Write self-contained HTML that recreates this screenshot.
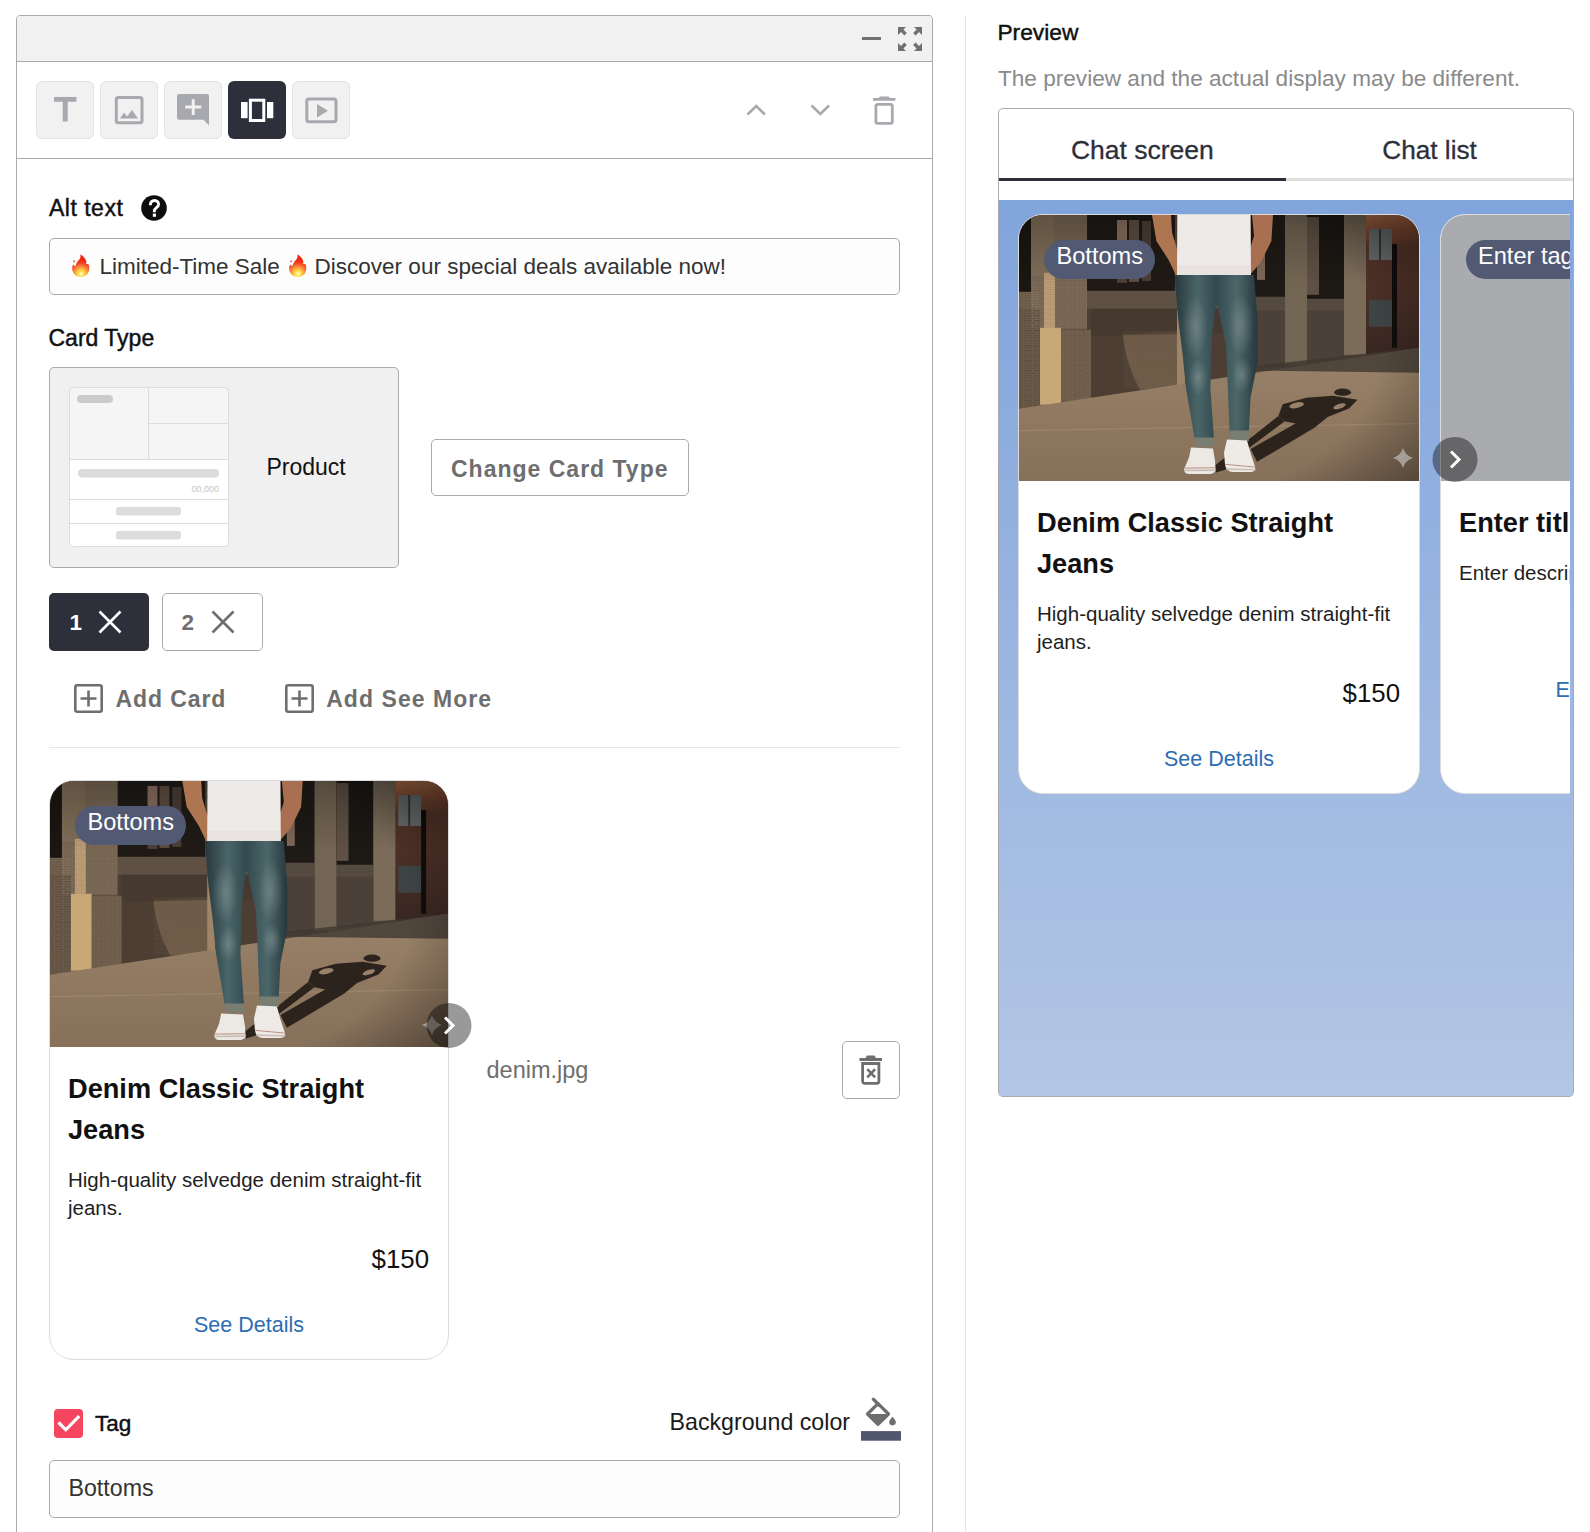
<!DOCTYPE html>
<html><head><meta charset="utf-8"><style>
*{margin:0;padding:0;}
html,body{width:1590px;height:1532px;overflow:hidden;background:#fff;}
body{position:relative;font-family:"Liberation Sans",sans-serif;}
.r{position:absolute;}
.t{position:absolute;white-space:nowrap;line-height:1;}
.card{position:absolute;width:400px;height:580px;box-sizing:border-box;border:1px solid #dcdcdc;border-radius:25px;background:#fff;overflow:hidden;}
.card .ph{position:absolute;left:0;top:0;width:398px;height:266.5px;overflow:hidden;}
.badge{position:absolute;left:25px;top:25px;width:111px;height:39px;border-radius:20px;background:#525a73;color:#fff;font-size:23.6px;line-height:33.5px;box-sizing:border-box;padding-left:12.5px;white-space:nowrap;}
</style></head><body>
<div class="r" style="left:16px;top:15px;width:915px;height:1600px;border:1px solid #aaaaae;border-radius:4px 4px 0 0;background:#fff;box-sizing:border-box;width:917px;"></div>
<div class="r" style="left:17px;top:16px;width:915px;height:45px;background:#f1f1f1;border-radius:3px 3px 0 0;"></div>
<div class="r" style="left:17px;top:61px;width:915px;height:1px;background:#aaaaae;"></div>
<div class="r" style="left:17px;top:158px;width:915px;height:1px;background:#aaaaae;"></div>
<div class="r" style="left:862px;top:37px;width:19px;height:3px;background:#707070;"></div>
<svg class="r" style="left:898px;top:27px" width="24" height="24" viewBox="0 0 24 24" fill="#707070">
<path d="M0 0h8l-2.6 2.6 3.4 3.4-2.4 2.4-3.4-3.4L0 8z"/>
<path d="M24 0h-8l2.6 2.6-3.4 3.4 2.4 2.4 3.4-3.4L24 8z"/>
<path d="M0 24h8l-2.6-2.6 3.4-3.4-2.4-2.4-3.4 3.4L0 16z"/>
<path d="M24 24h-8l2.6-2.6-3.4-3.4 2.4-2.4 3.4 3.4L24 16z"/>
</svg>
<div class="r" style="left:36px;top:81px;width:58px;height:58px;background:#f1f1f1;border:1px solid #e3e3e3;border-radius:6px;box-sizing:border-box;"></div>
<div class="r" style="left:100px;top:81px;width:58px;height:58px;background:#f1f1f1;border:1px solid #e3e3e3;border-radius:6px;box-sizing:border-box;"></div>
<div class="r" style="left:164px;top:81px;width:58px;height:58px;background:#f1f1f1;border:1px solid #e3e3e3;border-radius:6px;box-sizing:border-box;"></div>
<div class="r" style="left:228px;top:81px;width:58px;height:58px;background:#2d2f3b;border-radius:6px;"></div>
<div class="r" style="left:292px;top:81px;width:58px;height:58px;background:#f1f1f1;border:1px solid #e3e3e3;border-radius:6px;box-sizing:border-box;"></div>
<svg class="r" style="left:36px;top:81px" width="58" height="58" viewBox="0 0 58 58"><path fill="#a8a9ae" d="M18 16h22.5v4.8h-8.8v19.6h-5V20.8H18z"/></svg>
<svg class="r" style="left:100px;top:81px" width="58" height="58" viewBox="0 0 58 58"><rect x="16.3" y="16.4" width="25.7" height="25.4" rx="2" fill="none" stroke="#a8a9ae" stroke-width="3"/><path fill="#a8a9ae" d="M20 37.5l4-6 3 4 5-6.6 6 8.6z"/></svg>
<svg class="r" style="left:164px;top:81px" width="58" height="58" viewBox="0 0 58 58"><path fill="#a8a9ae" d="M15 13h28a2 2 0 0 1 2 2v29.3l-5.6-5.6H15a2 2 0 0 1-2-2V15a2 2 0 0 1 2-2z"/><path fill="#f1f1f1" d="M27.75 18.2h3v6.4h6.55v3h-6.55v6.4h-3v-6.4h-6.55v-3h6.55z"/></svg>
<svg class="r" style="left:228px;top:81px" width="58" height="58" viewBox="0 0 58 58"><rect x="13" y="21" width="6.6" height="16.2" fill="#fff"/><rect x="39" y="21" width="6.3" height="16.2" fill="#fff"/><rect x="22.4" y="19.2" width="13.4" height="20.3" fill="none" stroke="#fff" stroke-width="3"/></svg>
<svg class="r" style="left:292px;top:81px" width="58" height="58" viewBox="0 0 58 58"><rect x="14.8" y="17.9" width="29.2" height="22.8" rx="2" fill="none" stroke="#a8a9ae" stroke-width="3"/><path fill="#a8a9ae" d="M25 23v13.5l11-6.8z"/></svg>
<svg class="r" style="left:740px;top:95px" width="160" height="32" viewBox="0 0 160 32"><path d="M7.5 19.5l8.7-8.4 8.7 8.4" fill="none" stroke="#a8a9ae" stroke-width="2.6"/><path d="M71.5 10.5l8.8 8.5 8.8-8.5" fill="none" stroke="#a8a9ae" stroke-width="2.6"/><path fill="#a8a9ae" d="M133 3h22.4v2.8H133z M140 1.5h8.5l1.5 1.5h-11.5z"/><rect x="135.9" y="9.3" width="16.4" height="19" rx="1.8" fill="none" stroke="#a8a9ae" stroke-width="2.8"/></svg>
<div class="t " style="left:49px;top:197.11px;font-size:23px;color:#111;letter-spacing:0.5px;-webkit-text-stroke:0.45px #111;">Alt text</div>
<svg class="r" style="left:141px;top:194.5px" width="26" height="26" viewBox="0 0 26 26"><circle cx="13" cy="13" r="12.8" fill="#0d0d0d"/><path d="M9.3 10.2C9.3 6.9 11.2 5.5 13.6 5.5C16 5.5 17.6 7.2 17.6 9.5C17.6 12.5 13.3 12.9 13.3 16V17.3" fill="none" stroke="#fff" stroke-width="2.9"/><rect x="11.8" y="18.6" width="3.2" height="3.2" fill="#fff"/></svg>
<div class="r" style="left:49px;top:238px;width:851px;height:57px;border:1px solid #aaaaae;border-radius:5px;background:#fdfdfd;box-sizing:border-box;"></div>
<div class="r" style="left:71.8px;top:254px;line-height:0"><svg width="18" height="23" viewBox="0 0 18 23"><defs><radialGradient id="fg1" cx="9" cy="19.8" r="13" gradientUnits="userSpaceOnUse"><stop offset="0" stop-color="#fffbe0"/><stop offset="0.22" stop-color="#ffe04a"/><stop offset="0.5" stop-color="#fb9a3e"/><stop offset="0.8" stop-color="#f44a28"/><stop offset="1" stop-color="#ee2a14"/></radialGradient></defs><path fill="url(#fg1)" d="M8.6 0.3C10.5 1.8 12.8 3.6 13.9 6.2C14.6 7.8 14.3 9 14.1 10.1C15.3 9.8 16.4 10.3 16.6 10.4C17.3 12 17.6 14.2 16.9 17C16.3 19.6 14.2 21.6 11.6 22.6C10.2 23 7.6 23 5.8 22.5C3.4 21.6 1.5 19.6 0.6 17.2C-0.1 14.8 0.2 12.4 1 10.6C1.7 11.2 2.5 12 3.3 12.3C3.8 10.6 4.6 8.6 5.6 7.4C6.4 6.4 7.3 5.5 8.1 4.5C8.5 3.3 8.5 1.7 8.6 0.3z"/><ellipse cx="2.1" cy="7.3" rx="0.9" ry="1.1" fill="#f4502c"/></svg></div>
<div class="r" style="left:289px;top:254px;line-height:0"><svg width="18" height="23" viewBox="0 0 18 23"><defs><radialGradient id="fg2" cx="9" cy="19.8" r="13" gradientUnits="userSpaceOnUse"><stop offset="0" stop-color="#fffbe0"/><stop offset="0.22" stop-color="#ffe04a"/><stop offset="0.5" stop-color="#fb9a3e"/><stop offset="0.8" stop-color="#f44a28"/><stop offset="1" stop-color="#ee2a14"/></radialGradient></defs><path fill="url(#fg2)" d="M8.6 0.3C10.5 1.8 12.8 3.6 13.9 6.2C14.6 7.8 14.3 9 14.1 10.1C15.3 9.8 16.4 10.3 16.6 10.4C17.3 12 17.6 14.2 16.9 17C16.3 19.6 14.2 21.6 11.6 22.6C10.2 23 7.6 23 5.8 22.5C3.4 21.6 1.5 19.6 0.6 17.2C-0.1 14.8 0.2 12.4 1 10.6C1.7 11.2 2.5 12 3.3 12.3C3.8 10.6 4.6 8.6 5.6 7.4C6.4 6.4 7.3 5.5 8.1 4.5C8.5 3.3 8.5 1.7 8.6 0.3z"/><ellipse cx="2.1" cy="7.3" rx="0.9" ry="1.1" fill="#f4502c"/></svg></div>
<div class="t " style="left:99.4px;top:255.53px;font-size:22.5px;color:#333;">Limited-Time Sale</div>
<div class="t " style="left:314.6px;top:255.53px;font-size:22.5px;color:#333;">Discover our special deals available now!</div>
<div class="t " style="left:48.5px;top:326.91px;font-size:23px;color:#111;-webkit-text-stroke:0.45px #111;">Card Type</div>
<div class="r" style="left:49px;top:367px;width:350px;height:201px;border:1px solid #aaaaae;border-radius:5px;background:#f0f0f0;box-sizing:border-box;"></div>
<svg class="r" style="left:69px;top:387px" width="160" height="160" viewBox="0 0 160 160">
<rect x="0.5" y="0.5" width="159" height="159" rx="4" fill="#fff" stroke="#dcdcdc"/>
<path d="M4.5 0.5h151a4 4 0 0 1 4 4V72.5H0.5V4.5a4 4 0 0 1 4-4z" fill="#f5f5f5" stroke="#dcdcdc"/>
<path d="M79.5 0.5V72.5M79.5 36.5H159.5M0.5 112.5H159.5M0.5 136.5H159.5" stroke="#dcdcdc" fill="none"/>
<rect x="8" y="8" width="36" height="8" rx="4" fill="#cbcbcb"/>
<rect x="9" y="82" width="141" height="8.5" rx="4" fill="#dcdcdc"/>
<text x="150" y="105" text-anchor="end" font-family="Liberation Sans" font-size="9" fill="#c4c4c4">00,000</text>
<rect x="47" y="120" width="65" height="8.6" rx="3" fill="#dcdcdc"/>
<rect x="47" y="144" width="65" height="8.6" rx="3" fill="#dcdcdc"/>
</svg>
<div class="t " style="left:266.5px;top:456.11px;font-size:23px;color:#111;">Product</div>
<div class="r" style="left:431px;top:439px;width:258px;height:57px;border:1px solid #aaaaae;border-radius:5px;background:#fff;box-sizing:border-box;"></div>
<div class="t " style="left:451px;top:457.61px;font-size:23px;color:#6e6e6e;font-weight:700;letter-spacing:1.0px;">Change Card Type</div>
<div class="r" style="left:49px;top:593px;width:100px;height:58px;background:#2d2f3b;border-radius:5px;"></div>
<div class="r" style="left:162px;top:593px;width:101px;height:58px;border:1px solid #aaaaae;border-radius:5px;background:#fff;box-sizing:border-box;"></div>
<div class="t " style="left:69.5px;top:611.53px;font-size:22.5px;color:#fff;font-weight:700;">1</div>
<div class="t " style="left:181.5px;top:611.53px;font-size:22.5px;color:#6e6e6e;font-weight:700;">2</div>
<svg class="r" style="left:98px;top:610px" width="24" height="24" viewBox="0 0 24 24"><path d="M1.5 1.5l21 21M22.5 1.5l-21 21" stroke="#fff" stroke-width="2.6"/></svg>
<svg class="r" style="left:211px;top:610px" width="24" height="24" viewBox="0 0 24 24"><path d="M1.5 1.5l21 21M22.5 1.5l-21 21" stroke="#6e6e6e" stroke-width="2.6"/></svg>
<svg class="r" style="left:73.5px;top:684px" width="30" height="29" viewBox="0 0 30 29"><rect x="1.3" y="1.3" width="26.4" height="26.4" rx="2" fill="none" stroke="#6e6e6e" stroke-width="2.6"/><path d="M14.5 6.5v16M6.5 14.5h16" stroke="#6e6e6e" stroke-width="2.6"/></svg>
<svg class="r" style="left:284.5px;top:684px" width="30" height="29" viewBox="0 0 30 29"><rect x="1.3" y="1.3" width="26.4" height="26.4" rx="2" fill="none" stroke="#6e6e6e" stroke-width="2.6"/><path d="M14.5 6.5v16M6.5 14.5h16" stroke="#6e6e6e" stroke-width="2.6"/></svg>
<div class="t " style="left:115.5px;top:688.11px;font-size:23px;color:#6e6e6e;font-weight:700;letter-spacing:0.9px;">Add Card</div>
<div class="t " style="left:326.2px;top:688.11px;font-size:23px;color:#6e6e6e;font-weight:700;letter-spacing:1.05px;">Add See More</div>
<div class="r" style="left:49px;top:747px;width:851px;height:1px;background:#e6e6e6;"></div>
<div class="card" style="left:49px;top:779.8px;width:400px;"><div class="ph" style="width:398px"><svg width="100%" height="100%" viewBox="0 0 400 267" preserveAspectRatio="none" style="display:block">
<defs>
<linearGradient id="swa" x1="0" y1="0" x2="0" y2="1"><stop offset="0" stop-color="#9a836b"/><stop offset="0.5" stop-color="#907960"/><stop offset="1" stop-color="#86705a"/></linearGradient>
<linearGradient id="jna" x1="0" y1="0" x2="1" y2="0"><stop offset="0" stop-color="#27393e"/><stop offset="0.28" stop-color="#4a6568"/><stop offset="0.5" stop-color="#334a50"/><stop offset="0.75" stop-color="#4c676a"/><stop offset="1" stop-color="#26383d"/></linearGradient>
<pattern id="bra" width="9" height="5" patternUnits="userSpaceOnUse"><rect width="9" height="5" fill="none"/><path d="M0 4.5H9M4.5 0V2.2M0 2.2H9M8.9 2.2V4.5" stroke="#8d7a64" stroke-width="0.6" opacity="0.55"/></pattern>
<linearGradient id="tga" x1="0" y1="0" x2="0" y2="1"><stop offset="0" stop-color="#000" stop-opacity="0.25"/><stop offset="0.5" stop-color="#000" stop-opacity="0"/></linearGradient>
<radialGradient id="hla"><stop offset="0" stop-color="#fff" stop-opacity="0.2"/><stop offset="1" stop-color="#fff" stop-opacity="0"/></radialGradient>
<radialGradient id="vga" cx="0.32" cy="0.5" r="0.9"><stop offset="0.65" stop-color="#000" stop-opacity="0"/><stop offset="1" stop-color="#000" stop-opacity="0.45"/></radialGradient>
<linearGradient id="rba" x1="0" y1="0" x2="0" y2="1"><stop offset="0" stop-color="#c07a50"/><stop offset="0.1" stop-color="#8e5238"/><stop offset="0.22" stop-color="#5a382c"/><stop offset="1" stop-color="#342420"/></linearGradient>
</defs>
<rect width="400" height="267" fill="#5a4c3f"/>
<!-- far right building -->
<rect x="347" y="0" width="53" height="150" fill="url(#rba)"/>
<rect x="350" y="14" width="23" height="31" fill="#6d7272"/>
<rect x="360" y="14" width="2" height="31" fill="#3d3630"/>
<rect x="350" y="85" width="23" height="27" fill="#3e4444"/>
<rect x="373" y="29" width="5" height="104" fill="#100d0c"/>
<!-- left dark window -->
<rect x="0" y="0" width="12" height="77" fill="#1a1612"/>
<!-- upper pilaster -->
<rect x="12" y="0" width="56" height="114" fill="#736350"/>
<rect x="12" y="0" width="23" height="61" fill="#7d6b55"/>
<rect x="25" y="58" width="11" height="56" fill="#bf9f76"/>
<!-- central windows -->
<rect x="68" y="0" width="88" height="76" fill="#1f1a16"/>
<rect x="98" y="5" width="10" height="20" fill="#8a7060"/>
<rect x="110" y="5" width="10" height="62" fill="#5e4e42"/>
<rect x="98" y="28" width="10" height="40" fill="#4e4036"/>
<rect x="123" y="6" width="9" height="60" fill="#4a3e35"/>
<!-- ledges -->
<rect x="0" y="77" width="12" height="17" fill="#675747"/>
<rect x="68" y="76" width="170" height="18" fill="#5e5042"/>
<!-- lower left brick -->
<rect x="0" y="94" width="21" height="100" fill="#5e4f40"/>
<!-- lower wall -->
<rect x="68" y="94" width="170" height="96" fill="#4c3e33"/>
<path d="M104 120 L160 116 L160 172 L121 175 C112 160 106 140 104 120z" fill="#6b5945"/>
<path d="M72 94 L238 94 L238 118 L72 121z" fill="#45382d" opacity="0.7"/>
<!-- lower pilaster -->
<path d="M21 113h21v77H21z" fill="#c9a878"/>
<path d="M42 115h30v72H42z" fill="#6a5948"/>
<rect x="158" y="95" width="8" height="76" fill="#a08468"/>
<!-- right windows & columns -->
<rect x="232" y="0" width="34" height="82" fill="#1e1a16"/>
<rect x="238" y="25" width="8" height="40" fill="#7e6858"/>
<rect x="266" y="0" width="22" height="150" fill="#736553"/>
<rect x="288" y="0" width="37" height="84" fill="#1c1814"/>
<rect x="288" y="2" width="12" height="78" fill="#5e5044"/>
<rect x="325" y="0" width="22" height="140" fill="#7b6c59"/>
<rect x="232" y="82" width="34" height="14" fill="#554a40"/>
<rect x="288" y="84" width="37" height="12" fill="#554a40"/>
<rect x="232" y="96" width="34" height="56" fill="#4b4139"/>
<rect x="288" y="96" width="37" height="50" fill="#4b4139"/>
<rect x="12" y="0" width="56" height="114" fill="url(#bra)"/>
<rect x="0" y="77" width="21" height="117" fill="url(#bra)"/>
<rect x="42" y="115" width="30" height="72" fill="url(#bra)"/>
<rect x="104" y="116" width="56" height="58" fill="url(#bra)" opacity="0.5"/>
<rect width="400" height="140" fill="url(#tga)"/>
<!-- sidewalk -->
<path d="M0 194 L400 133 L400 267 L0 267z" fill="url(#swa)"/>
<path d="M238 151 L400 133 L400 158 L238 156z" fill="#3e3731" opacity="0.8"/>
<path d="M0 216 L400 209" stroke="#a38c74" stroke-width="1.2" opacity="0.7"/>
<!-- person shadow -->
<g fill="#2c231d">
<path d="M196.3 251.5 L210.2 248.3 L265.8 206.6 L259.4 201.3z"/>
<path d="M231.6 234.4 L238 247.3 L295.8 213 L278.7 207.7z"/>
<path d="M259.4 201.3 L263.7 189.5 L287.2 183.1 L314 181 L338.5 185.2 L330 193.8 L308.6 202.4 L295.8 213 L276.5 208.8 L265.8 206.6z"/>
<ellipse cx="323.6" cy="177.5" rx="8.5" ry="3.6"/>
</g>
<ellipse cx="277.6" cy="190.6" rx="7.5" ry="2.8" fill="#98806a" transform="rotate(-12 277.6 190.6)"/>
<ellipse cx="320.4" cy="191.7" rx="6.5" ry="2.4" fill="#98806a" transform="rotate(-18 320.4 191.7)"/>
<!-- arms -->
<path d="M133 0 L152 0 L153 17.4 L161.8 47 L181 61 L176 65 L157 65 L155.7 57.5 L149.6 45 L137.4 26z" fill="#ad7550"/>
<path d="M233 0 L254 0 L252.4 26 L242 47 L233 57.5 L228 63 L205 61 L210 56 L228 43.6 L235 21z" fill="#a87050"/>
<!-- shirt -->
<path d="M158.3 0 L231.5 0 L232 61 L158 61z" fill="#eeeae7"/>
<path d="M158 50 L232 50 L232 61 L158 61z" fill="#d9d3cf" opacity="0.3"/>
<!-- jeans -->
<path d="M155.7 60 L235 60 L238.5 104.5 L238.5 148 L231.5 183 L229.8 218 L210.6 219.5 L208.9 174 L207 130.7 L198.4 90.6 L196.7 90.6 L193 122 L191.4 174 L195 224.7 L175.7 224.7 L167 174 L163.6 139.4 L159.2 104.5z" fill="url(#jna)"/>
<g fill="url(#hla)">
<ellipse cx="176" cy="112" rx="13" ry="32"/>
<ellipse cx="222" cy="110" rx="13" ry="32"/>
<ellipse cx="179" cy="163" rx="10" ry="18"/>
<ellipse cx="223" cy="160" rx="10" ry="18"/>
</g>
<path d="M175.5 223 L195 223 L195.5 232 L176 232z" fill="#7a7d72"/>
<path d="M210.5 216 L230 216 L229.8 226.5 L210.5 226.5z" fill="#7a7d72"/>
<!-- shoes -->
<path d="M196 251 L206 243 L207 255 L197 258z" fill="#2c231d"/>
<path d="M172 233 L194 234 L196 246 L196.5 255 C196.5 258 194 259.5 190 259.5 L170 259.5 C166 259.5 164.5 256.5 165.5 253.5 L170 243z" fill="#ece8e3"/>
<path d="M166 253.6 L196.4 253.2" stroke="#a0504a" stroke-width="0.6"/>
<path d="M165.6 256 L196.4 255.6" stroke="#c9beb6" stroke-width="1.6"/>
<path d="M208 225 L228 226 L232 240 L236 252 C237 256 235 257.5 231 257.5 L214 257.5 C210 257.5 207 255 206 250 L205 238z" fill="#eeeae5"/>
<path d="M206.2 249.8 L236 252.6" stroke="#a0504a" stroke-width="0.6"/>
<path d="M207.5 254.6 L236.5 255.2" stroke="#cbc0b8" stroke-width="1.6"/>
<rect width="400" height="267" fill="url(#vga)"/>
</svg></div><div class="badge">Bottoms</div><div class="t" style="left:18px;top:294.05px;font-size:27.2px;color:#111;font-weight:700;">Denim Classic Straight</div><div class="t" style="left:18px;top:335.05px;font-size:27.2px;color:#111;font-weight:700;">Jeans</div><div class="t" style="left:18px;top:388.73px;font-size:20.5px;color:#1e1e1e;font-weight:400;">High-quality selvedge denim straight-fit</div><div class="t" style="left:18px;top:416.73px;font-size:20.5px;color:#1e1e1e;font-weight:400;">jeans.</div><div class="t" style="right:19px;top:466.13px;font-size:25.8px;color:#111;">$150</div><div class="t" style="left:0;width:398px;text-align:center;top:533.98px;font-size:21.5px;color:#2d6db3;">See Details</div></div>
<svg class="r" style="left:422.4px;top:1015.4px" width="20" height="20" viewBox="0 0 22 22"><path d="M11 0Q13.6 8.4 22 11Q13.6 13.6 11 22Q8.4 13.6 0 11Q8.4 8.4 11 0z" fill="#b0aba6" opacity="0.85"/></svg>
<svg class="r" style="left:426px;top:1003px" width="46" height="46" viewBox="0 0 46 46"><circle cx="23" cy="22.5" r="22.5" fill="#000" fill-opacity="0.4"/><path d="M19 14.5l8 8-8 8" fill="none" stroke="#fff" stroke-width="3"/></svg>
<div class="t " style="left:486.5px;top:1058.88px;font-size:23.5px;color:#6e6e6e;">denim.jpg</div>
<div class="r" style="left:842px;top:1041px;width:58px;height:58px;border:1px solid #aaaaae;border-radius:5px;background:#fff;box-sizing:border-box;"></div>
<svg class="r" style="left:859px;top:1055px" width="24" height="30" viewBox="0 0 24 30"><path fill="#6e6e6e" d="M0.5 3h22.5v3H0.5z M8 0.5h7.5l1.5 2.5H6.5z"/><path d="M3.6 8.5h16.3v17.8a2 2 0 0 1-2 2H5.6a2 2 0 0 1-2-2z" fill="none" stroke="#6e6e6e" stroke-width="2.8"/><path d="M8.3 14.2L16.1 22.4M16.1 14.2L8.3 22.4" stroke="#6e6e6e" stroke-width="2.6"/></svg>
<div class="r" style="left:53.5px;top:1409px;width:29px;height:29px;background:#f5455f;border-radius:4px;"></div>
<svg class="r" style="left:53.5px;top:1409px" width="29" height="29" viewBox="0 0 29 29"><path d="M4.5 13.5l7.3 7.3 13.4-13.6" fill="none" stroke="#fff" stroke-width="3.2"/></svg>
<div class="t " style="left:95px;top:1412.63px;font-size:22.5px;color:#111;-webkit-text-stroke:0.45px #111;">Tag</div>
<div class="t " style="right:740px;top:1411.34px;font-size:23.2px;color:#1a1a1a;">Background color</div>
<svg class="r" style="left:860px;top:1397px" width="42" height="45" viewBox="0 0 42 45"><path d="M13.5 2.4L19.3 8.2" stroke="#6e6e6e" stroke-width="3.4" stroke-linecap="round"/><path d="M18 6.6L28.5 17 18 27.4 7.5 17z" fill="none" stroke="#6e6e6e" stroke-width="3.2" stroke-linejoin="round"/><path d="M7.5 17H28.5L18 27.4z" fill="#6e6e6e"/><path d="M32.5 19.8C34 21.6 35.8 23.3 35.8 25.1a3.3 3.3 0 0 1-6.6 0C29.2 23.3 31 21.6 32.5 19.8z" fill="#6e6e6e"/><rect x="1" y="34.1" width="40" height="9.6" fill="#4f566e"/></svg>
<div class="r" style="left:49px;top:1460px;width:851px;height:58px;border:1px solid #aaaaae;border-radius:5px;background:#fdfdfd;box-sizing:border-box;"></div>
<div class="t " style="left:68.5px;top:1476.84px;font-size:23.2px;color:#333;">Bottoms</div>
<div class="r" style="left:965px;top:15px;width:1px;height:1517px;background:#e4e4e4;"></div>
<div class="t " style="left:997.4px;top:21.18px;font-size:22.8px;color:#111;-webkit-text-stroke:0.45px #111;">Preview</div>
<div class="t " style="left:998px;top:67.55px;font-size:22.6px;color:#8a8a8a;">The preview and the actual display may be different.</div>
<div class="r" style="left:998px;top:108px;width:576px;height:989px;border:1px solid #aaaaae;border-radius:5px;background:#fff;box-sizing:border-box;overflow:hidden;"></div>
<div class="r" style="left:999px;top:178px;width:574px;height:3px;background:#dedede;"></div>
<div class="r" style="left:999px;top:178px;width:287px;height:3px;background:#2d2f3b;"></div>
<div class="t " style="left:842.4000000000001px;width:600px;text-align:center;top:136.74px;font-size:26.5px;color:#2d2f3b;-webkit-text-stroke:0.3px #2d2f3b;">Chat screen</div>
<div class="t " style="left:1129.6px;width:600px;text-align:center;top:136.70px;font-size:26.2px;color:#2d2f3b;-webkit-text-stroke:0.3px #2d2f3b;">Chat list</div>
<div class="r" style="left:999px;top:200px;width:574px;height:896px;background:linear-gradient(#80a4dc,#b3c6e5);"></div>
<div class="r" style="left:999px;top:200px;width:571px;height:896px;overflow:hidden"><div class="card" style="left:19px;top:13.8px;width:402px;"><div class="ph" style="width:400px"><svg width="100%" height="100%" viewBox="0 0 400 267" preserveAspectRatio="none" style="display:block">
<defs>
<linearGradient id="swb" x1="0" y1="0" x2="0" y2="1"><stop offset="0" stop-color="#9a836b"/><stop offset="0.5" stop-color="#907960"/><stop offset="1" stop-color="#86705a"/></linearGradient>
<linearGradient id="jnb" x1="0" y1="0" x2="1" y2="0"><stop offset="0" stop-color="#27393e"/><stop offset="0.28" stop-color="#4a6568"/><stop offset="0.5" stop-color="#334a50"/><stop offset="0.75" stop-color="#4c676a"/><stop offset="1" stop-color="#26383d"/></linearGradient>
<pattern id="brb" width="9" height="5" patternUnits="userSpaceOnUse"><rect width="9" height="5" fill="none"/><path d="M0 4.5H9M4.5 0V2.2M0 2.2H9M8.9 2.2V4.5" stroke="#8d7a64" stroke-width="0.6" opacity="0.55"/></pattern>
<linearGradient id="tgb" x1="0" y1="0" x2="0" y2="1"><stop offset="0" stop-color="#000" stop-opacity="0.25"/><stop offset="0.5" stop-color="#000" stop-opacity="0"/></linearGradient>
<radialGradient id="hlb"><stop offset="0" stop-color="#fff" stop-opacity="0.2"/><stop offset="1" stop-color="#fff" stop-opacity="0"/></radialGradient>
<radialGradient id="vgb" cx="0.32" cy="0.5" r="0.9"><stop offset="0.65" stop-color="#000" stop-opacity="0"/><stop offset="1" stop-color="#000" stop-opacity="0.45"/></radialGradient>
<linearGradient id="rbb" x1="0" y1="0" x2="0" y2="1"><stop offset="0" stop-color="#c07a50"/><stop offset="0.1" stop-color="#8e5238"/><stop offset="0.22" stop-color="#5a382c"/><stop offset="1" stop-color="#342420"/></linearGradient>
</defs>
<rect width="400" height="267" fill="#5a4c3f"/>
<!-- far right building -->
<rect x="347" y="0" width="53" height="150" fill="url(#rbb)"/>
<rect x="350" y="14" width="23" height="31" fill="#6d7272"/>
<rect x="360" y="14" width="2" height="31" fill="#3d3630"/>
<rect x="350" y="85" width="23" height="27" fill="#3e4444"/>
<rect x="373" y="29" width="5" height="104" fill="#100d0c"/>
<!-- left dark window -->
<rect x="0" y="0" width="12" height="77" fill="#1a1612"/>
<!-- upper pilaster -->
<rect x="12" y="0" width="56" height="114" fill="#736350"/>
<rect x="12" y="0" width="23" height="61" fill="#7d6b55"/>
<rect x="25" y="58" width="11" height="56" fill="#bf9f76"/>
<!-- central windows -->
<rect x="68" y="0" width="88" height="76" fill="#1f1a16"/>
<rect x="98" y="5" width="10" height="20" fill="#8a7060"/>
<rect x="110" y="5" width="10" height="62" fill="#5e4e42"/>
<rect x="98" y="28" width="10" height="40" fill="#4e4036"/>
<rect x="123" y="6" width="9" height="60" fill="#4a3e35"/>
<!-- ledges -->
<rect x="0" y="77" width="12" height="17" fill="#675747"/>
<rect x="68" y="76" width="170" height="18" fill="#5e5042"/>
<!-- lower left brick -->
<rect x="0" y="94" width="21" height="100" fill="#5e4f40"/>
<!-- lower wall -->
<rect x="68" y="94" width="170" height="96" fill="#4c3e33"/>
<path d="M104 120 L160 116 L160 172 L121 175 C112 160 106 140 104 120z" fill="#6b5945"/>
<path d="M72 94 L238 94 L238 118 L72 121z" fill="#45382d" opacity="0.7"/>
<!-- lower pilaster -->
<path d="M21 113h21v77H21z" fill="#c9a878"/>
<path d="M42 115h30v72H42z" fill="#6a5948"/>
<rect x="158" y="95" width="8" height="76" fill="#a08468"/>
<!-- right windows & columns -->
<rect x="232" y="0" width="34" height="82" fill="#1e1a16"/>
<rect x="238" y="25" width="8" height="40" fill="#7e6858"/>
<rect x="266" y="0" width="22" height="150" fill="#736553"/>
<rect x="288" y="0" width="37" height="84" fill="#1c1814"/>
<rect x="288" y="2" width="12" height="78" fill="#5e5044"/>
<rect x="325" y="0" width="22" height="140" fill="#7b6c59"/>
<rect x="232" y="82" width="34" height="14" fill="#554a40"/>
<rect x="288" y="84" width="37" height="12" fill="#554a40"/>
<rect x="232" y="96" width="34" height="56" fill="#4b4139"/>
<rect x="288" y="96" width="37" height="50" fill="#4b4139"/>
<rect x="12" y="0" width="56" height="114" fill="url(#brb)"/>
<rect x="0" y="77" width="21" height="117" fill="url(#brb)"/>
<rect x="42" y="115" width="30" height="72" fill="url(#brb)"/>
<rect x="104" y="116" width="56" height="58" fill="url(#brb)" opacity="0.5"/>
<rect width="400" height="140" fill="url(#tgb)"/>
<!-- sidewalk -->
<path d="M0 194 L400 133 L400 267 L0 267z" fill="url(#swb)"/>
<path d="M238 151 L400 133 L400 158 L238 156z" fill="#3e3731" opacity="0.8"/>
<path d="M0 216 L400 209" stroke="#a38c74" stroke-width="1.2" opacity="0.7"/>
<!-- person shadow -->
<g fill="#2c231d">
<path d="M196.3 251.5 L210.2 248.3 L265.8 206.6 L259.4 201.3z"/>
<path d="M231.6 234.4 L238 247.3 L295.8 213 L278.7 207.7z"/>
<path d="M259.4 201.3 L263.7 189.5 L287.2 183.1 L314 181 L338.5 185.2 L330 193.8 L308.6 202.4 L295.8 213 L276.5 208.8 L265.8 206.6z"/>
<ellipse cx="323.6" cy="177.5" rx="8.5" ry="3.6"/>
</g>
<ellipse cx="277.6" cy="190.6" rx="7.5" ry="2.8" fill="#98806a" transform="rotate(-12 277.6 190.6)"/>
<ellipse cx="320.4" cy="191.7" rx="6.5" ry="2.4" fill="#98806a" transform="rotate(-18 320.4 191.7)"/>
<!-- arms -->
<path d="M133 0 L152 0 L153 17.4 L161.8 47 L181 61 L176 65 L157 65 L155.7 57.5 L149.6 45 L137.4 26z" fill="#ad7550"/>
<path d="M233 0 L254 0 L252.4 26 L242 47 L233 57.5 L228 63 L205 61 L210 56 L228 43.6 L235 21z" fill="#a87050"/>
<!-- shirt -->
<path d="M158.3 0 L231.5 0 L232 61 L158 61z" fill="#eeeae7"/>
<path d="M158 50 L232 50 L232 61 L158 61z" fill="#d9d3cf" opacity="0.3"/>
<!-- jeans -->
<path d="M155.7 60 L235 60 L238.5 104.5 L238.5 148 L231.5 183 L229.8 218 L210.6 219.5 L208.9 174 L207 130.7 L198.4 90.6 L196.7 90.6 L193 122 L191.4 174 L195 224.7 L175.7 224.7 L167 174 L163.6 139.4 L159.2 104.5z" fill="url(#jnb)"/>
<g fill="url(#hlb)">
<ellipse cx="176" cy="112" rx="13" ry="32"/>
<ellipse cx="222" cy="110" rx="13" ry="32"/>
<ellipse cx="179" cy="163" rx="10" ry="18"/>
<ellipse cx="223" cy="160" rx="10" ry="18"/>
</g>
<path d="M175.5 223 L195 223 L195.5 232 L176 232z" fill="#7a7d72"/>
<path d="M210.5 216 L230 216 L229.8 226.5 L210.5 226.5z" fill="#7a7d72"/>
<!-- shoes -->
<path d="M196 251 L206 243 L207 255 L197 258z" fill="#2c231d"/>
<path d="M172 233 L194 234 L196 246 L196.5 255 C196.5 258 194 259.5 190 259.5 L170 259.5 C166 259.5 164.5 256.5 165.5 253.5 L170 243z" fill="#ece8e3"/>
<path d="M166 253.6 L196.4 253.2" stroke="#a0504a" stroke-width="0.6"/>
<path d="M165.6 256 L196.4 255.6" stroke="#c9beb6" stroke-width="1.6"/>
<path d="M208 225 L228 226 L232 240 L236 252 C237 256 235 257.5 231 257.5 L214 257.5 C210 257.5 207 255 206 250 L205 238z" fill="#eeeae5"/>
<path d="M206.2 249.8 L236 252.6" stroke="#a0504a" stroke-width="0.6"/>
<path d="M207.5 254.6 L236.5 255.2" stroke="#cbc0b8" stroke-width="1.6"/>
<rect width="400" height="267" fill="url(#vgb)"/>
</svg></div><div class="badge">Bottoms</div><div class="t" style="left:18px;top:294.05px;font-size:27.2px;color:#111;font-weight:700;">Denim Classic Straight</div><div class="t" style="left:18px;top:335.05px;font-size:27.2px;color:#111;font-weight:700;">Jeans</div><div class="t" style="left:18px;top:388.73px;font-size:20.5px;color:#1e1e1e;font-weight:400;">High-quality selvedge denim straight-fit</div><div class="t" style="left:18px;top:416.73px;font-size:20.5px;color:#1e1e1e;font-weight:400;">jeans.</div><div class="t" style="right:19px;top:466.13px;font-size:25.8px;color:#111;">$150</div><div class="t" style="left:0;width:400px;text-align:center;top:533.98px;font-size:21.5px;color:#2d6db3;">See Details</div></div>
<div class="card" style="left:440.5px;top:13.8px;"><div class="ph" style="background:#aaabaf"></div><div class="badge" style="width:140px">Enter tag</div><div class="t" style="left:18.5px;top:294.05px;font-size:27.2px;color:#111;font-weight:700;">Enter title</div><div class="t" style="left:18.5px;top:347.73px;font-size:20.5px;color:#1e1e1e;">Enter description</div><div class="t" style="left:115px;top:465.48px;font-size:21.5px;color:#2d6db3;">Enter button</div></div>
</div>
<svg class="r" style="left:1392.7px;top:448.4px" width="20" height="20" viewBox="0 0 22 22"><path d="M11 0Q13.6 8.4 22 11Q13.6 13.6 11 22Q8.4 13.6 0 11Q8.4 8.4 11 0z" fill="#b0aba6" opacity="0.85"/></svg>
<svg class="r" style="left:1432px;top:436px" width="46" height="46" viewBox="0 0 46 46"><circle cx="23" cy="23.4" r="22.5" fill="#000" fill-opacity="0.4"/><path d="M19 15.5l8 8-8 8" fill="none" stroke="#fff" stroke-width="3"/></svg>
</body></html>
